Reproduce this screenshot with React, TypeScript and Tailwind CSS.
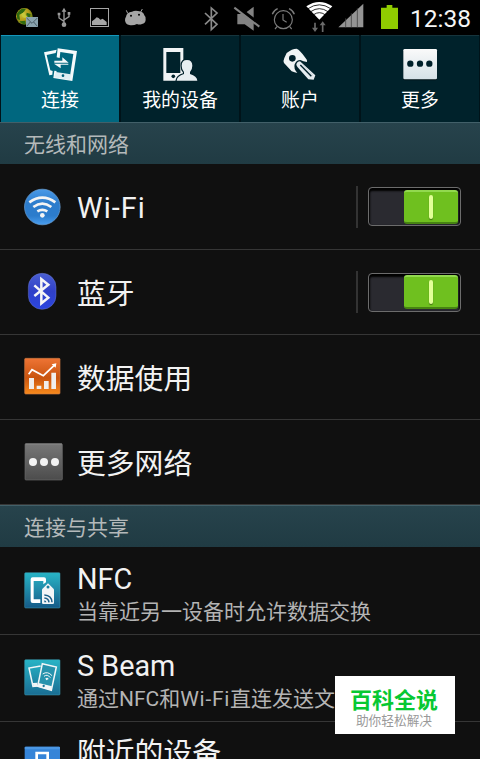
import { useState } from 'react';
import type { ReactNode } from 'react';

interface Tab {
  label: string;
  icon: ReactNode;
}

interface RowProps {
  icon: ReactNode;
  title: ReactNode;
  summary?: ReactNode;
  height: string;
  children?: ReactNode;
}

function StatusBar() {
  return (
    <header className="flex h-[35px] w-full bg-black">
      {/* globe + mail */}
      <svg className="ml-[15px] h-[35px] w-[24px]" viewBox="45 0 72 105">
        <defs>
          <radialGradient id="globe" cx="0.4" cy="0.35" r="0.7">
            <stop offset="0" stopColor="#c9c53a" />
            <stop offset="0.55" stopColor="#b59a17" />
            <stop offset="1" stopColor="#3d6b12" />
          </radialGradient>
        </defs>
        <circle cx="73" cy="49" r="25" fill="url(#globe)" />
        <path d="M50 42 Q60 22 78 26 L70 38 L58 44 L60 60 L52 58 Z M80 38 L92 42 L90 54 L78 52 Z M60 64 L76 62 L76 72 Q68 74 60 66 Z" fill="#2f6a10" />
        <path d="M72 36 L76 46 L84 48 L76 54 L68 52 L64 42 Z" fill="#c8c93a" />
        <rect x="78" y="51" width="36" height="30" fill="#8aa3ae" />
        <path d="M80 54 L96 70 L112 54 M80 79 L91 66 M112 79 L101 66" fill="none" stroke="#3e515c" strokeWidth="2.5" />
      </svg>
      {/* usb */}
      <svg className="ml-[18px] h-[35px] w-[15px]" viewBox="171 0 45 105">
        <g fill="none" stroke="#9a9a9a" strokeWidth="4">
          <path d="M192 72 V32 M177 44 V54 L192 64 M207 42 V50 L192 60" />
        </g>
        <path d="M192 23 L199 35 H185 Z M173 38 H181 V46 H173 Z M203 36 H211 V44 H203 Z" fill="#9a9a9a" />
        <circle cx="192" cy="74" r="7" fill="#9a9a9a" />
      </svg>
      {/* picture */}
      <svg className="ml-[17px] h-[35px] w-[21px]" viewBox="267 0 63 105">
        <rect x="271.500" y="25.500" width="54" height="54" fill="none" stroke="#a5a5a5" strokeWidth="3" />
        <path d="M276 75 V64 L284 58 L290 52 L296 54 L301 59 L308 56 L320 66 V75 Z" fill="#a5a5a5" />
      </svg>
      {/* android */}
      <svg className="ml-[14px] h-[35px] w-[23px]" viewBox="372 0 69 105">
        <path d="M383 40 L379 31 M422 36 L427 27" stroke="#a5a5a5" strokeWidth="3" />
        <path d="M378 50 Q380 36 396 35 Q404 31 414 33 Q430 34 433 46 Q438 50 437 60 Q436 70 426 72 Q418 75 411 72 Q400 77 388 75 Q376 73 375 61 Q375 54 378 50 Z" fill="#a5a5a5" />
        <circle cx="393" cy="47" r="3" fill="#000" />
        <circle cx="417" cy="44" r="3" fill="#000" />
      </svg>
      {/* bluetooth */}
      <svg className="ml-[56px] h-[35px] w-[17px]" viewBox="9 0 51 105">
        <path d="M15 39 L51 73 L34 89 V24 L51 39 L15 73" fill="none" stroke="#8a8a8a" strokeWidth="5" />
      </svg>
      {/* muted speaker */}
      <svg className="ml-[13px] h-[35px] w-[30px]" viewBox="99 0 90 105">
        <path d="M112 42 H132 L161 20 V92 L134 73 H112 Z" fill="#828282" />
        <path d="M106 17 L184 76" stroke="#000" strokeWidth="10" />
        <path d="M103 23 L178 80" stroke="#828282" strokeWidth="6" />
      </svg>
      {/* alarm */}
      <svg className="ml-[8px] h-[35px] w-[25px]" viewBox="213 0 75 105">
        <g fill="none" stroke="#7c7c7c" strokeWidth="3.500">
          <circle cx="250" cy="59" r="27" />
          <path d="M249 42 V60 L260 67" />
          <path d="M217 43 Q221 31 233 26 M267 26 Q279 31 283 43" strokeWidth="4" />
          <path d="M231 80 L225 87 M269 80 L275 87" />
        </g>
      </svg>
      {/* wifi with traffic arrows */}
      <svg className="ml-[9px] h-[35px] w-[28px]" viewBox="315 0 84 105">
        <path d="M319 19 Q358 -7 397 19 L358 59 Z" fill="#fff" />
        <g fill="none" stroke="#000" strokeWidth="2.500">
          <path d="M324 26 Q358 3 392 26" />
          <path d="M332 35 Q358 17 384 35" />
          <path d="M341 44 Q358 32 375 44" />
        </g>
        <path d="M345 68 V86 M368 96 V73" stroke="#6a6a6a" strokeWidth="5" />
        <path d="M336 83 H354 L345 96 Z M359 76 H377 L368 64 Z" fill="#6a6a6a" />
      </svg>
      {/* signal */}
      <svg className="ml-[5px] h-[35px] w-[26px]" viewBox="414 0 78 105">
        <path d="M415 82 L490 11 V82 Z" fill="#949494" />
        <path d="M437 55 V82 M454 40 V82 M472 25 V82" stroke="#444" strokeWidth="2.500" />
      </svg>
      {/* battery */}
      <svg className="ml-[16px] h-[35px] w-[18px]" viewBox="540 0 54 105">
        <path d="M543 23 H560 V15 H577 V23 H594 V87 H543 Z" fill="#90cc00" />
      </svg>
      <span className="ml-[12px] mt-[4px] whitespace-nowrap text-[24.5px] leading-[30px] text-[#f5f5f5]">12:38</span>
    </header>
  );
}

const tabs: Tab[] = [
  {
    label: '连接',
    icon: (
      <svg className="size-[38px]" viewBox="123 36 114 114">
        <path d="M170 47 L132 55 L148 124 L157 122 L158 111 L151 109 L140 63 L167 57 Z" fill="#f5fafb" />
        <path d="M173 43 L231 51 L217 141 L160 132 L163 110 L170 111 L168 118 L210 125 L220 60 L181 54 L179 72 L170 70 Z" fill="#f5fafb" />
        <path d="M168 114 L212 121 L210 138 L162 130 Z" fill="#dfeef3" />
        <circle cx="189" cy="125" r="4" fill="#005f7a" />
        <path d="M163 80 L187 80 L187 70 L206 86 L163 86 Z M205 92 L182 92 L182 103 L162 89 L205 89 Z" fill="#f5fafb" />
      </svg>
    ),
  },
  {
    label: '我的设备',
    icon: (
      <svg className="size-[38px]" viewBox="483 36 114 114">
        <path d="M490 42 H550 V140 H490 Z M499 54 V117 H541 V54 Z" fill="#f1f4f5" fillRule="evenodd" />
        <circle cx="520" cy="127" r="5.500" fill="#00232c" />
        <path d="M561 78 Q577 78 577 95 Q577 107 570 114 V120 Q591 126 592 140 H530 Q531 126 552 120 V114 Q545 107 545 95 Q545 78 561 78 Z" fill="#e8eef1" stroke="#00202a" strokeWidth="7" paintOrder="stroke" />
      </svg>
    ),
  },
  {
    label: '账户',
    icon: (
      <svg className="size-[38px]" viewBox="123 36 114 114">
        <path d="M140 57 Q156 44 170 44 Q180 48 196 71 Q203 78 201 84 Q190 82 181 78 Q169 78 164 91 Q160 104 172 117 Q164 116 155 112 L132 87 Q129 80 133 72 Z" fill="#f0f4f5" />
        <circle cx="157" cy="73" r="10" fill="#00202a" />
        <path d="M180 82 Q172 82 169 91 Q169 96 173 100 L205 136 L221 137 L226 124 Z" fill="#e6edf1" />
        <path d="M181 93 L214 127" stroke="#00202a" strokeWidth="4" />
        <path d="M188 93 L219 124" stroke="#b9c7ce" strokeWidth="2" />
      </svg>
    ),
  },
  {
    label: '更多',
    icon: (
      <svg className="size-[38px]" viewBox="483 36 114 114">
        <defs>
          <linearGradient id="more" x1="0" y1="0" x2="0" y2="1">
            <stop offset="0" stopColor="#fafafa" />
            <stop offset="1" stopColor="#d5e1e7" />
          </linearGradient>
        </defs>
        <rect x="490" y="47" width="101" height="92" rx="5" fill="#000" opacity="0.5" />
        <rect x="490" y="45" width="101" height="91" rx="4" fill="url(#more)" />
        <g fill="#00202a">
          <circle cx="511" cy="89" r="9.500" />
          <circle cx="540" cy="89" r="9.500" />
          <circle cx="568" cy="89" r="9.500" />
        </g>
      </svg>
    ),
  },
];

function WifiIcon() {
  return (
    <svg className="size-[40px]" viewBox="66 80 120 120">
      <defs>
        <linearGradient id="wifi" x1="0" y1="0" x2="0" y2="1">
          <stop offset="0" stopColor="#4a9ae8" />
          <stop offset="0.4" stopColor="#2c7ccc" />
          <stop offset="0.75" stopColor="#2c7ccc" />
          <stop offset="1" stopColor="#4a9ff0" />
        </linearGradient>
      </defs>
      <circle cx="127" cy="140" r="53.500" fill="url(#wifi)" stroke="#6ea3d6" strokeWidth="2" />
      <g fill="none" stroke="#f4f4f4" strokeWidth="8">
        <path d="M88 126 Q127 98 166 126" />
        <path d="M100 140 Q127 120 154 140" />
        <path d="M112 153 Q127 144 142 153" />
      </g>
      <circle cx="127" cy="165" r="7" fill="#f4f4f4" />
    </svg>
  );
}

function BluetoothIcon() {
  return (
    <svg className="size-[40px]" viewBox="66 336 120 120">
      <defs>
        <linearGradient id="bt" x1="0" y1="0" x2="0" y2="1">
          <stop offset="0" stopColor="#4a5fd2" />
          <stop offset="0.5" stopColor="#3040c8" />
          <stop offset="1" stopColor="#2b46e0" />
        </linearGradient>
      </defs>
      <rect x="85" y="340" width="83" height="108" rx="41" fill="url(#bt)" stroke="#6674c4" strokeWidth="1.500" />
      <path d="M103 376 L145 413 L124 430 V357 L145 374 L103 408" fill="none" stroke="#f6f6f6" strokeWidth="7.500" />
    </svg>
  );
}

function DataIcon() {
  return (
    <svg className="size-[40px]" viewBox="66 66 120 120">
      <defs>
        <linearGradient id="data" x1="0" y1="0" x2="0" y2="1">
          <stop offset="0" stopColor="#ee7435" />
          <stop offset="0.55" stopColor="#c9540f" />
          <stop offset="1" stopColor="#f88a1c" />
        </linearGradient>
      </defs>
      <rect x="74" y="70" width="106" height="107" rx="3" fill="url(#data)" stroke="#c87540" strokeWidth="2" />
      <path d="M86 118 L96 104 L130 122 L165 89" fill="none" stroke="#fff" strokeWidth="5" />
      <path d="M155 88 L169 85 L167 98 Z" fill="#fff" />
      <path d="M87 129 H102 V162 H87 Z M110 152 H124 V162 H110 Z M132 138 H146 V162 H132 Z M154 113 H168 V162 H154 Z" fill="#f0eeec" />
    </svg>
  );
}

function MoreIcon() {
  return (
    <svg className="size-[40px] overflow-visible" viewBox="66 321 120 120">
      <defs>
        <linearGradient id="grey" x1="0" y1="0" x2="0" y2="1">
          <stop offset="0" stopColor="#777" />
          <stop offset="1" stopColor="#4c4c4c" />
        </linearGradient>
      </defs>
      <rect x="75" y="326" width="112" height="109" rx="3" fill="url(#grey)" stroke="#6b6b6b" strokeWidth="2" />
      <path d="M76 327 H186" stroke="#999" strokeWidth="2" />
      <g fill="#f3f3f3">
        <circle cx="99" cy="381" r="12" />
        <circle cx="132" cy="381" r="12" />
        <circle cx="165" cy="381" r="12" />
      </g>
    </svg>
  );
}

function NfcIcon() {
  return (
    <svg className="size-[40px]" viewBox="66 212 120 120">
      <defs>
        <linearGradient id="nfc" x1="0" y1="0" x2="0" y2="1">
          <stop offset="0" stopColor="#28b4c6" />
          <stop offset="1" stopColor="#165b88" />
        </linearGradient>
      </defs>
      <rect x="74" y="217" width="106" height="106" rx="3" fill="url(#nfc)" stroke="#3f9cb0" strokeWidth="1.500" />
      <path d="M98 231 H132 Q138 231 138 237 V246 L130 252 V242 H101 V297 H121 V308 H98 Q92 308 92 302 V237 Q92 231 98 231 Z" fill="#fff" />
      <path d="M144 249 L162 267 V307 Q162 311 158 311 H130 Q126 311 126 307 V267 Z" fill="#f2f5f7" />
      <circle cx="144" cy="260" r="4.500" fill="#1c7fa0" />
      <g fill="none" stroke="#1b5f88" strokeWidth="4.500">
        <path d="M133 284 Q155 285 156 306" />
        <path d="M133 293 Q146 294 147 306" />
      </g>
      <path d="M133 300 Q139 301 139 306 H133 Z" fill="#1b5f88" />
    </svg>
  );
}

function BeamIcon() {
  return (
    <svg className="size-[40px]" viewBox="66 474 120 120">
      <defs>
        <linearGradient id="beam" x1="0" y1="0" x2="0" y2="1">
          <stop offset="0" stopColor="#28b4c6" />
          <stop offset="1" stopColor="#1a6d93" />
        </linearGradient>
      </defs>
      <rect x="74" y="479" width="106" height="106" rx="3" fill="url(#beam)" stroke="#3f9cb0" strokeWidth="1.500" />
      <path d="M122 498 L87 504 L99 559 L112 558" fill="none" stroke="#f2f6f7" strokeWidth="4.500" />
      <path d="M98 549 L112 548 L112 559 L101 561 Z" fill="#f2f6f7" />
      <path d="M127 491 L169 501 L154 571 L113 559 Z" fill="#2793ad" stroke="#f2f6f7" strokeWidth="4.500" />
      <path d="M116 549 L156 559 L153 571 L113 560 Z" fill="#f2f6f7" />
      <circle cx="131" cy="558" r="3.500" fill="#1c7798" />
      <g fill="none" stroke="#f2f6f7" strokeWidth="3">
        <path d="M128 522 Q143 512 156 527" />
        <path d="M132 529 Q142 521 151 533" />
      </g>
      <path d="M136 535 Q143 531 146 537 L139 541 Z" fill="#f2f6f7" />
    </svg>
  );
}

function NearbyIcon() {
  return (
    <svg className="size-[40px]" viewBox="66 735 120 120">
      <rect x="74" y="740" width="106" height="106" rx="3" fill="#3584d8" />
      <rect x="74" y="740" width="106" height="8" rx="3" fill="#4b97e4" />
      <path d="M110 800 V759 H143 V800" fill="none" stroke="#fff" strokeWidth="8" />
    </svg>
  );
}

function Toggle() {
  const [on, setOn] = useState(true);

  return (
    <div className="ml-auto flex items-center pr-[19px]">
      <div className="mr-[10px] h-[42px] w-[2px] bg-[#333]" />
      <button
        onClick={() => setOn(!on)}
        className={
          'flex h-[39px] w-[93px] items-center rounded-[4px] border border-[#6c6c6c] bg-[#2a2a30] px-[2px] shadow-[inset_0_2px_2px_1px_#000] ' +
          (on ? 'justify-end' : 'justify-start')
        }
      >
        <span className="flex h-[34px] w-[54px] items-center justify-center rounded-[3px] border-t-2 border-b-2 border-t-[#92d94f] border-b-[#478412] bg-[#6fc01f]">
          <span className="h-[24px] w-[4px] rounded-full bg-[#e2ff98] shadow-[0_1px_1px_#3f7010]" />
        </span>
      </button>
    </div>
  );
}

function SectionHeader({ title }: { title: string }) {
  return (
    <h2 className="flex h-[42px] shrink-0 items-center border-t border-[#426069] bg-linear-to-b from-[#27434c] to-[#203b43] pt-[2px] pl-[24px] text-[21px] leading-[30px] text-[#b4b9ba]">
      {title}
    </h2>
  );
}

function Row({ icon, title, summary, height, children }: RowProps) {
  return (
    <div className={`flex shrink-0 items-center border-b border-[#363636] pl-[22px] ${height}`}>
      {icon}
      <div className={'ml-[15px] whitespace-nowrap ' + (summary ? 'pt-[6px]' : 'pt-[3px]')}>
        <div className="text-[28.8px] leading-[36px] text-[#f2f2f2]">{title}</div>
        {summary && <div className="text-[21px] leading-[30px] text-[#b4b4b4]">{summary}</div>}
      </div>
      {children}
    </div>
  );
}

export default function App() {
  const [active, setActive] = useState(0);

  return (
    <main className="relative flex h-[759px] w-[480px] flex-col overflow-hidden bg-[#101010] font-[Roboto,'Noto_Sans_CJK_SC',sans-serif]">
      <StatusBar />
      <nav className="grid h-[87px] shrink-0 grid-cols-4 bg-[#001319]">
        {tabs.map((tab, index) => (
          <button
            key={tab.label}
            onClick={() => setActive(index)}
            className={
              'mx-px flex flex-col items-center border-t pt-[10px] ' +
              (index === active ? 'border-[#1597bb] bg-[#00677f]' : 'border-[#16343c] bg-[#00222b]')
            }
          >
            {tab.icon}
            <span className="mt-[3px] text-[18.9px] leading-[28px] text-white">{tab.label}</span>
          </button>
        ))}
      </nav>

      <SectionHeader title="无线和网络" />
      <Row icon={<WifiIcon />} title={<span className="tracking-[1.1px]">Wi-Fi</span>} height="h-[86px]">
        <Toggle />
      </Row>
      <Row icon={<BluetoothIcon />} title="蓝牙" height="h-[85px]">
        <Toggle />
      </Row>
      <Row icon={<DataIcon />} title="数据使用" height="h-[85px]" />
      <Row icon={<MoreIcon />} title="更多网络" height="h-[85px]" />

      <SectionHeader title="连接与共享" />
      <Row icon={<NfcIcon />} title="NFC" summary="当靠近另一设备时允许数据交换" height="h-[88px]" />
      <Row
        icon={<BeamIcon />}
        title="S Beam"
        summary={<>通过NFC和<span className="tracking-[0.7px]">Wi-Fi</span>直连发送文件</>}
        height="h-[87px]"
      />
      <Row icon={<NearbyIcon />} title="附近的设备" summary={'\u00a0'} height="h-[87px]" />

      <div className="absolute top-[676px] left-[335px] flex h-[58px] w-[120px] flex-col items-center bg-white pt-[11px] pr-[2px]">
        <span className="text-[22px] leading-[27px] font-bold text-[#07c832]">百科全说</span>
        <span className="text-[12.7px] leading-[14px] text-[#999]">助你轻松解决</span>
      </div>
    </main>
  );
}
